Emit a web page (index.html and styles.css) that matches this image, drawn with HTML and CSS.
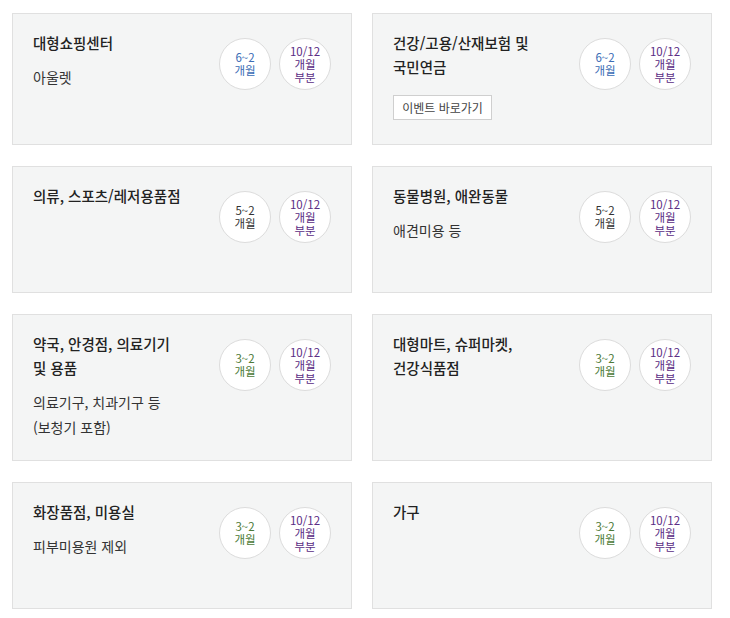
FILE: index.html
```html
<!DOCTYPE html>
<html lang="ko">
<head>
<meta charset="utf-8">
<link rel="stylesheet" href="styles.css">
</head>
<body>
<div class="grid">
  <div class="card">
    <div class="info">
      <div class="title">대형쇼핑센터</div>
      <div class="sub">아울렛</div>
    </div>
    <div class="badges">
      <div class="circle blue"><span>6~2</span><span>개월</span></div>
      <div class="circle purple"><span>10/12</span><span>개월</span><span>부분</span></div>
    </div>
  </div>
  <div class="card">
    <div class="info">
      <div class="title">건강/고용/산재보험 및 국민연금</div>
      <button class="btn">이벤트 바로가기</button>
    </div>
    <div class="badges">
      <div class="circle blue"><span>6~2</span><span>개월</span></div>
      <div class="circle purple"><span>10/12</span><span>개월</span><span>부분</span></div>
    </div>
  </div>
  <div class="card">
    <div class="info">
      <div class="title">의류, 스포츠/레저용품점</div>
    </div>
    <div class="badges">
      <div class="circle dark"><span>5~2</span><span>개월</span></div>
      <div class="circle purple"><span>10/12</span><span>개월</span><span>부분</span></div>
    </div>
  </div>
  <div class="card">
    <div class="info">
      <div class="title">동물병원, 애완동물</div>
      <div class="sub">애견미용 등</div>
    </div>
    <div class="badges">
      <div class="circle dark"><span>5~2</span><span>개월</span></div>
      <div class="circle purple"><span>10/12</span><span>개월</span><span>부분</span></div>
    </div>
  </div>
  <div class="card">
    <div class="info">
      <div class="title">약국, 안경점, 의료기기 및 용품</div>
      <div class="sub">의료기구, 치과기구 등 (보청기 포함)</div>
    </div>
    <div class="badges">
      <div class="circle green"><span>3~2</span><span>개월</span></div>
      <div class="circle purple"><span>10/12</span><span>개월</span><span>부분</span></div>
    </div>
  </div>
  <div class="card">
    <div class="info">
      <div class="title">대형마트, 슈퍼마켓, 건강식품점</div>
    </div>
    <div class="badges">
      <div class="circle green"><span>3~2</span><span>개월</span></div>
      <div class="circle purple"><span>10/12</span><span>개월</span><span>부분</span></div>
    </div>
  </div>
  <div class="card">
    <div class="info">
      <div class="title">화장품점, 미용실</div>
      <div class="sub">피부미용원 제외</div>
    </div>
    <div class="badges">
      <div class="circle green"><span>3~2</span><span>개월</span></div>
      <div class="circle purple"><span>10/12</span><span>개월</span><span>부분</span></div>
    </div>
  </div>
  <div class="card">
    <div class="info">
      <div class="title">가구</div>
    </div>
    <div class="badges">
      <div class="circle green"><span>3~2</span><span>개월</span></div>
      <div class="circle purple"><span>10/12</span><span>개월</span><span>부분</span></div>
    </div>
  </div>
</div>
</body>
</html>
```
FILE: styles.css
```css
* { box-sizing: border-box; }
body {
  margin: 0;
  background: #fff;
  font-family: "Noto Sans CJK KR", "Noto Sans", sans-serif;
  color: #222;
}
.grid {
  display: grid;
  grid-template-columns: 340px 340px;
  column-gap: 20px;
  row-gap: 21px;
  padding: 13px 0 0 12px;
}
.card {
  background: #f4f5f5;
  border: 1px solid #e0e0e0;
  min-height: 127px;
  padding: 17px 20px 20px 20px;
  display: flex;
  justify-content: space-between;
  align-items: flex-start;
}
.card:nth-child(-n+2) { min-height: 132px; }
.info {
  width: 150px;
  display: flex;
  flex-direction: column;
  align-items: flex-start;
  word-break: keep-all;
}
.title {
  font-size: 14.5px;
  font-weight: 500;
  line-height: 24px;
  color: #222;
}
.sub {
  margin-top: 10px;
  font-size: 14px;
  line-height: 25px;
  color: #333;
}
.btn {
  margin-top: 16px;
  height: 25px;
  width: 99px;
  padding: 0;
  background: #fff;
  border: 1px solid #cfcfcf;
  font-family: inherit;
  font-size: 12px;
  color: #444;
}
.badges {
  display: flex;
  gap: 8px;
  margin-top: 7px;
}
.circle {
  width: 52px;
  height: 52px;
  border-radius: 50%;
  background: #fff;
  border: 1px solid #dcdcdc;
  display: flex;
  flex-direction: column;
  align-items: center;
  justify-content: center;
  font-size: 11.5px;
  line-height: 13px;
}
.blue { color: #3a6cb5; }
.purple { color: #5a2d84; }
.green { color: #4c7a37; }
.dark { color: #333; }
```
